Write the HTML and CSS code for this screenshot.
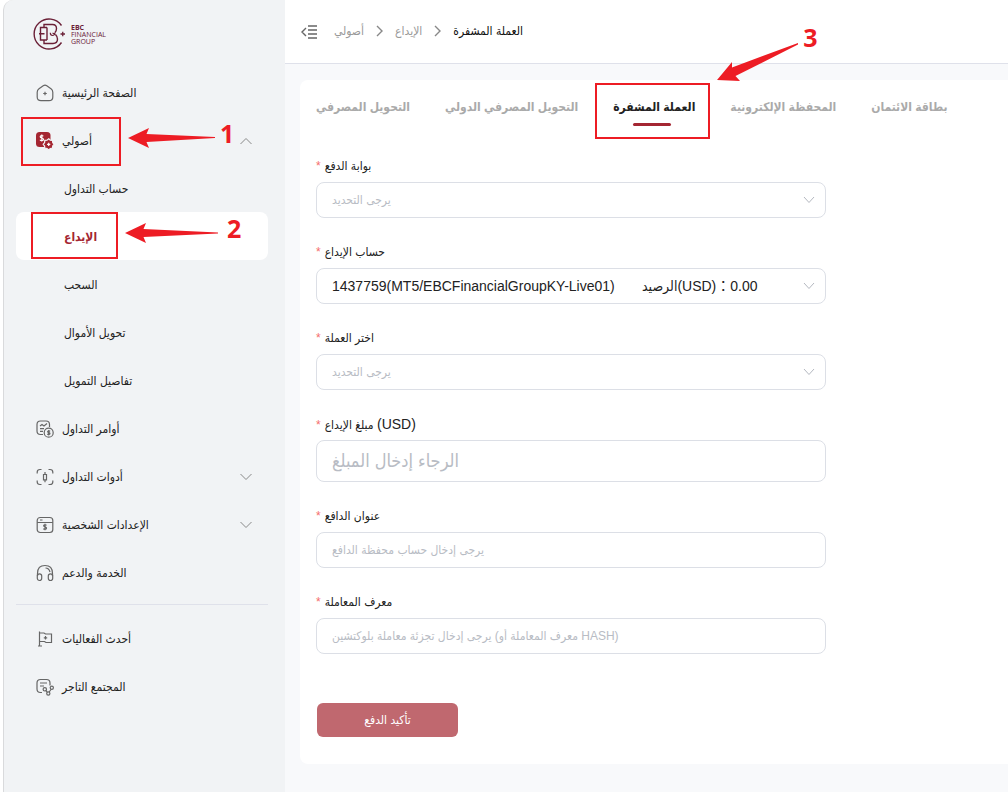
FILE: index.html
```html
<!DOCTYPE html>
<html lang="ar">
  <head>
    <meta charset="UTF-8" />
    <meta name="viewport" content="width=device-width, initial-scale=1.0" />
    <title>EBC Financial Group - الإيداع</title>
    <link rel="stylesheet" href="styles.css">
  </head>

  <body>
    <div class="layout">
      <aside class="sidebar">
        <a class="logo" href="#">
          <svg width="34" height="34" viewBox="0 0 34 34" fill="none" stroke="#6b2037" stroke-width="1.4">
            <path d="M29.500 8.500A15 15 0 1 0 29.500 25.500" />
            <path d="M15 10.500H8.500V23H15M7 16.700H12.500" />
            <path d="M12 10.500V7.500H20.500Q24.500 7.500 24.500 11.500Q24.500 14 23 15.500M12 23V26.500H21Q25.500 26.500 25.500 22Q25.500 19.500 23.500 17.500M15 10.500V23" />
            <path d="M18.300 15.800Q18.300 18.500 20.500 18.500Q22.500 18.500 23 15.500M20.500 16L23.500 17.500" stroke-width="1.200" />
            <path d="M28.500 17H33M30.750 14.800V19.200" stroke-width="1.300" />
          </svg>
          <span class="logo-text"><b>EBC</b><br>FINANCIAL<br>GROUP</span>
        </a>
        <nav>
          <ul class="menu">
            <li>
              <a class="item" href="#">
                <svg class="icon" viewBox="0 0 18 18"><path d="M7.200 1.700Q9 .5 10.800 1.700L15 4.700Q16.800 6 16.800 8.200V13Q16.800 16.700 13 16.700H5Q1.200 16.700 1.200 13V8.200Q1.200 6 3 4.700ZM9 7.700V11.300M7.200 9.500H10.800" /></svg>
                الصفحة الرئيسية
              </a>
            </li>
            <li class="group">
              <a class="item" href="#">
                <svg class="icon" viewBox="0 0 18 18">
                  <rect class="solid" x="0" y="0" width="14.500" height="15" rx="3.500" />
                  <path class="cut" d="M7.300 4.300Q6.800 3.500 5.800 3.500Q4.200 3.500 4.200 4.700Q4.200 5.700 5.800 6Q7.500 6.300 7.500 7.400Q7.500 8.600 5.800 8.600Q4.500 8.600 4 7.700M5.800 2.500V9.600" />
                  <path class="solid rim" d="M12.700 6.700L14.300 8.200L16.500 8.400L16.700 10.600L18 12.300L16.700 14L16.500 16.200L14.300 16.500L12.700 18L11 16.500L8.800 16.200L8.600 14L7.200 12.300L8.600 10.600L8.800 8.400L11 8.200Z" />
                  <path class="cut" d="M12.700 10.800V14M11.100 12.400H14.300" />
                </svg>
                أصولي
                <svg class="fold" viewBox="0 0 12 8"><path d="M.5 7L6 1.500L11.500 7" /></svg>
              </a>
              <span class="mark mark-assets"></span>
              <svg class="arrow arrow-1" width="88" height="20" viewBox="0 0 88 20"><path d="M0 10L21 0L18.500 6L87 9V10L18.500 14L21 20Z" /></svg>
              <b class="step step-1">1</b>
            </li>
            <li><a class="item sub" href="#">حساب التداول</a></li>
            <li class="group">
              <a class="item sub active" href="#">الإيداع</a>
              <span class="mark mark-deposit"></span>
              <svg class="arrow arrow-2" width="94" height="20" viewBox="0 0 94 20"><path d="M0 10L21 0L18.500 6L93 9.500V10.500L18.500 14L21 20Z" /></svg>
              <b class="step step-2">2</b>
            </li>
            <li><a class="item sub" href="#">السحب</a></li>
            <li><a class="item sub" href="#">تحويل الأموال</a></li>
            <li><a class="item sub" href="#">تفاصيل التمويل</a></li>
            <li>
              <a class="item" href="#">
                <svg class="icon" viewBox="0 0 18 18"><path d="M13.500 7V4.500Q13.500 1 10 1H4.500Q1 1 1 4.500V11Q1 14.500 4.500 14.500H7M4 6L6 4.500L8 6L11 3.500M4 8.700H8M4 11.300H7" /><circle cx="12.700" cy="12.700" r="4.500" /><path d="M14.200 11.300Q12.800 10.500 11.800 11.200Q11.200 12.200 12.700 12.600Q14.400 13 13.800 14Q12.700 15 11.200 14.100M12.700 10V15.500" /></svg>
                أوامر التداول
              </a>
            </li>
            <li>
              <a class="item" href="#">
                <svg class="icon" viewBox="0 0 18 18"><path d="M1.200 5.500V4Q1.200 1.500 4 1.500H5.500M12.500 1.500H14Q16.800 1.500 16.800 4V5.500M16.800 12.500V14Q16.800 16.500 14 16.500H12.500M5.500 16.500H4Q1.200 16.500 1.200 14V12.500M7.500 6.500H10.500V11.800H7.500ZM9 4V6.500M9 11.800V14.200" /></svg>
                أدوات التداول
                <svg class="fold" viewBox="0 0 12 8"><path d="M.5 1L6 6.500L11.500 1" /></svg>
              </a>
            </li>
            <li>
              <a class="item" href="#">
                <svg class="icon" viewBox="0 0 18 18"><rect x="1.200" y="1.500" width="15.600" height="15" rx="3" /><path d="M1.200 6.500H16.800M4 4H6.500M10.600 9.200Q9 8.300 7.800 9.200Q7.300 10.500 9 10.900Q11 11.400 10.300 12.800Q9 13.800 7.300 12.700M9 7.800V14.200" /></svg>
                الإعدادات الشخصية
                <svg class="fold" viewBox="0 0 12 8"><path d="M.5 1L6 6.500L11.500 1" /></svg>
              </a>
            </li>
            <li>
              <a class="item" href="#">
                <svg class="icon" viewBox="0 0 18 18"><path d="M1.500 12V9.500Q1.500 1.500 9 1.500Q16.500 1.500 16.500 9.500V12" /><path d="M9.500 4Q13 4 14 8" /><rect x="1.300" y="9.800" width="4.400" height="6.700" rx="2.200" /><rect x="12.300" y="9.800" width="4.400" height="6.700" rx="2.200" /></svg>
                الخدمة والدعم
              </a>
            </li>
          </ul>
          <ul class="menu extra">
            <li>
              <a class="item" href="#">
                <svg class="icon" viewBox="0 0 18 18"><path d="M3.500 1.500V16M2 16H6M3.500 3H8L9.500 4H15.500V12.500H10L8.500 11.500H3.500M9.500 6V9.500M7.800 7.800H11.200" /></svg>
                أحدث الفعاليات
              </a>
            </li>
            <li>
              <a class="item" href="#">
                <svg class="icon" viewBox="0 0 18 18"><path d="M6 14.500H4.500Q1 14.500 1 11V5Q1 1.500 4.500 1.500H10.500Q14 1.500 14 5V7.500M4 5H11M4 8H8M9.800 12.500L11.200 14M13.200 14L15 11.500" /><circle cx="8.800" cy="11.300" r="1.700" /><circle cx="12.300" cy="15.500" r="1.600" /><circle cx="15.800" cy="9.800" r="1.600" /></svg>
                المجتمع التاجر
              </a>
            </li>
          </ul>
        </nav>
      </aside>

      <div class="page">
        <header class="topbar">
          <button class="collapse" type="button" aria-label="طي القائمة">
            <svg width="16" height="14" viewBox="0 0 16 14"><path d="M5 3L1 7L5 11M7 1H16M7 5H16M7 9H16M7 13H16" /></svg>
          </button>
          <nav class="crumbs">
            <a href="#">أصولي</a>
            <svg width="7" height="12" viewBox="0 0 7 12"><path d="M1 1L6 6L1 11" /></svg>
            <a href="#">الإيداع</a>
            <svg width="7" height="12" viewBox="0 0 7 12"><path d="M1 1L6 6L1 11" /></svg>
            <a class="current" href="#">العملة المشفرة</a>
          </nav>
        </header>

        <main class="card">
          <nav class="tabs">
            <a href="#">التحويل المصرفي</a>
            <a href="#">التحويل المصرفي الدولي</a>
            <span class="group">
              <a class="on" href="#">العملة المشفرة</a>
              <span class="mark mark-crypto"></span>
              <svg class="arrow arrow-3" width="82" height="40" viewBox="0 0 82 40"><path d="M0 39L15 21V26.500L81 2V3.500L18.500 35L23 40Z" /></svg>
              <b class="step step-3">3</b>
            </span>
            <a href="#">المحفظة الإلكترونية</a>
            <a href="#">بطاقة الائتمان</a>
          </nav>

          <form class="form">
            <div class="field">
              <label for="gateway"><i>*</i>بوابة الدفع</label>
              <div class="select">
                <select id="gateway" class="empty"><option>يرجى التحديد</option></select>
                <svg viewBox="0 0 12 8"><path d="M1 1L6 6.500L11 1" /></svg>
              </div>
            </div>
            <div class="field">
              <label for="account"><i>*</i>حساب الإيداع</label>
              <div class="select">
                <select id="account"><option>1437759(MT5/EBCFinancialGroupKY-Live01)&nbsp;&nbsp;&nbsp;&nbsp;&nbsp;&nbsp; الرصيد(USD)：0.00</option></select>
                <svg viewBox="0 0 12 8"><path d="M1 1L6 6.500L11 1" /></svg>
              </div>
            </div>
            <div class="field">
              <label for="currency"><i>*</i>اختر العملة</label>
              <div class="select">
                <select id="currency" class="empty"><option>يرجى التحديد</option></select>
                <svg viewBox="0 0 12 8"><path d="M1 1L6 6.500L11 1" /></svg>
              </div>
            </div>
            <div class="field">
              <label for="amount"><i>*</i>مبلغ الإيداع <span class="latin">(USD)</span></label>
              <input id="amount" class="large" placeholder="الرجاء إدخال المبلغ" />
            </div>
            <div class="field">
              <label for="payer"><i>*</i>عنوان الدافع</label>
              <input id="payer" placeholder="يرجى إدخال حساب محفظة الدافع" />
            </div>
            <div class="field">
              <label for="txid"><i>*</i>معرف المعاملة</label>
              <input id="txid" placeholder="معرف المعاملة أو) يرجى إدخال تجزئة معاملة بلوكتشين HASH)" />
            </div>
            <button class="submit" type="button">تأكيد الدفع</button>
          </form>
        </main>
      </div>
    </div>
  </body>
</html>
```
FILE: styles.css
```css
* {
  box-sizing: border-box;
}
body {
  margin: 0;
  background: #fff;
  color: #222;
  font-family: "Liberation Sans", "DejaVu Sans Condensed", "DejaVu Sans",
    "Noto Sans CJK TC", sans-serif;
  font-size: 12px;
  line-height: 20px;
}
a {
  color: inherit;
  text-decoration: none;
}
.layout {
  display: flex;
  min-height: 100vh;
  padding-left: 3px;
}

/* sidebar */
.sidebar {
  flex: none;
  width: 282px;
  padding: 17px 17px 0 12px;
  border-left: 1px solid #d9dadc;
  border-top-left-radius: 10px;
  background: #f1f3f5;
}
.logo {
  display: flex;
  gap: 5px;
  align-items: center;
  margin-left: 16px;
  color: #6b2037;
}
.logo-text {
  font-family: "Open Sans", sans-serif;
  font-size: 7px;
  line-height: 7px;
}
.menu {
  margin: 17px 0 0;
  padding: 0;
  list-style: none;
}
.extra {
  margin-top: 8px;
  padding-top: 9px;
  border-top: 1px solid #dfe1ea;
}
.item {
  display: flex;
  align-items: center;
  gap: 8px;
  height: 48px;
  padding: 2px 16px 0 20px;
  border-radius: 8px;
}
.sub {
  padding-left: 48px;
}
.active {
  background: #fff;
  color: #a42632;
  font-weight: bold;
}
.icon {
  width: 18px;
  height: 18px;
  fill: none;
  stroke: #666;
  stroke-width: 1.2;
}
.icon .solid {
  fill: #a42632;
  stroke: none;
}
.icon .rim {
  stroke: #f1f3f5;
}
.icon .cut {
  stroke: #fff;
}
.fold {
  width: 12px;
  height: 8px;
  margin-left: auto;
  fill: none;
  stroke: #888;
}

/* numbered steps over the page */
.group {
  position: relative;
}
.mark,
.arrow,
.step {
  position: absolute;
  pointer-events: none;
}
.mark {
  border: 2px solid #ed1c24;
}
.arrow {
  fill: #ed1c24;
}
.step {
  color: #ed1c24;
  font: bold 25px/28px "Open Sans", sans-serif;
}
.mark-assets {
  left: 5px;
  top: 1px;
  width: 100px;
  height: 49px;
}
.arrow-1 {
  left: 112px;
  top: 12px;
}
.step-1 {
  left: 204px;
  top: 3px;
}
.mark-deposit {
  left: 15px;
  top: 0;
  width: 87px;
  height: 47px;
}
.arrow-2 {
  left: 109px;
  top: 11px;
}
.step-2 {
  left: 211px;
  top: 2px;
}
.mark-crypto {
  inset: -14px -15px -22px -18px;
}
.arrow-3 {
  left: 104px;
  top: -56px;
}
.step-3 {
  left: 190px;
  top: -74px;
}

/* top bar */
.page {
  flex: 1;
  min-width: 0;
  background: #f8f9fb;
}
.topbar {
  display: flex;
  align-items: center;
  gap: 17px;
  height: 64px;
  padding: 0 16px;
  border-bottom: 1px solid #dfe1ea;
  background: #fff;
}
.collapse {
  display: flex;
  padding: 0;
  border: 0;
  background: none;
}
.collapse svg {
  fill: none;
  stroke: #666;
  stroke-width: 1.4;
}
.crumbs {
  display: flex;
  align-items: center;
  gap: 12px;
  padding-bottom: 2px;
  color: #999;
}
.crumbs svg {
  fill: none;
  stroke: #888;
  stroke-width: 1.4;
}
.current {
  color: #111;
}

/* deposit card */
.card {
  margin: 16px 0 28px 15px;
  padding: 17px 16px 27px;
  border-radius: 8px 0 0 8px;
  background: #fff;
}
.tabs {
  display: flex;
  gap: 35px;
  color: #aaa;
  font-weight: bold;
  white-space: nowrap;
}
.on {
  display: block;
  color: #222;
}
.on::after {
  content: "";
  position: absolute;
  left: calc(50% - 21px);
  bottom: -9px;
  width: 38px;
  height: 3px;
  border-radius: 2px;
  background: #a42632;
}
.form {
  max-width: 510px;
  padding-top: 39px;
}
.field {
  display: flex;
  flex-direction: column;
  gap: 6px;
  margin-bottom: 24px;
}
.field label {
  height: 20px;
}
.field i {
  margin-right: 4px;
  color: #f56c6c;
  font-style: normal;
}
.latin {
  font-size: 14px;
}
.select {
  position: relative;
}
.select svg {
  position: absolute;
  right: 11px;
  top: 14px;
  width: 12px;
  height: 8px;
  fill: none;
  stroke: #b4b8c0;
  pointer-events: none;
}
select,
input {
  display: block;
  width: 100%;
  height: 36px;
  padding: 0 15px;
  border: 1px solid #dcdfe6;
  border-radius: 8px;
  background: #fff;
  color: #222;
  font-family: inherit;
  font-size: 14px;
  appearance: none;
}
.empty,
input {
  font-size: 12px;
}
.empty,
::placeholder {
  color: #b8bcc4;
}
.large {
  height: 42px;
  font-size: 18px;
}
.submit {
  display: block;
  width: 141px;
  height: 34px;
  margin: 49px 0 0 1px;
  border: 0;
  border-radius: 6px;
  background: #c0686f;
  color: #fff;
  font-family: inherit;
  font-size: 12px;
}
```
